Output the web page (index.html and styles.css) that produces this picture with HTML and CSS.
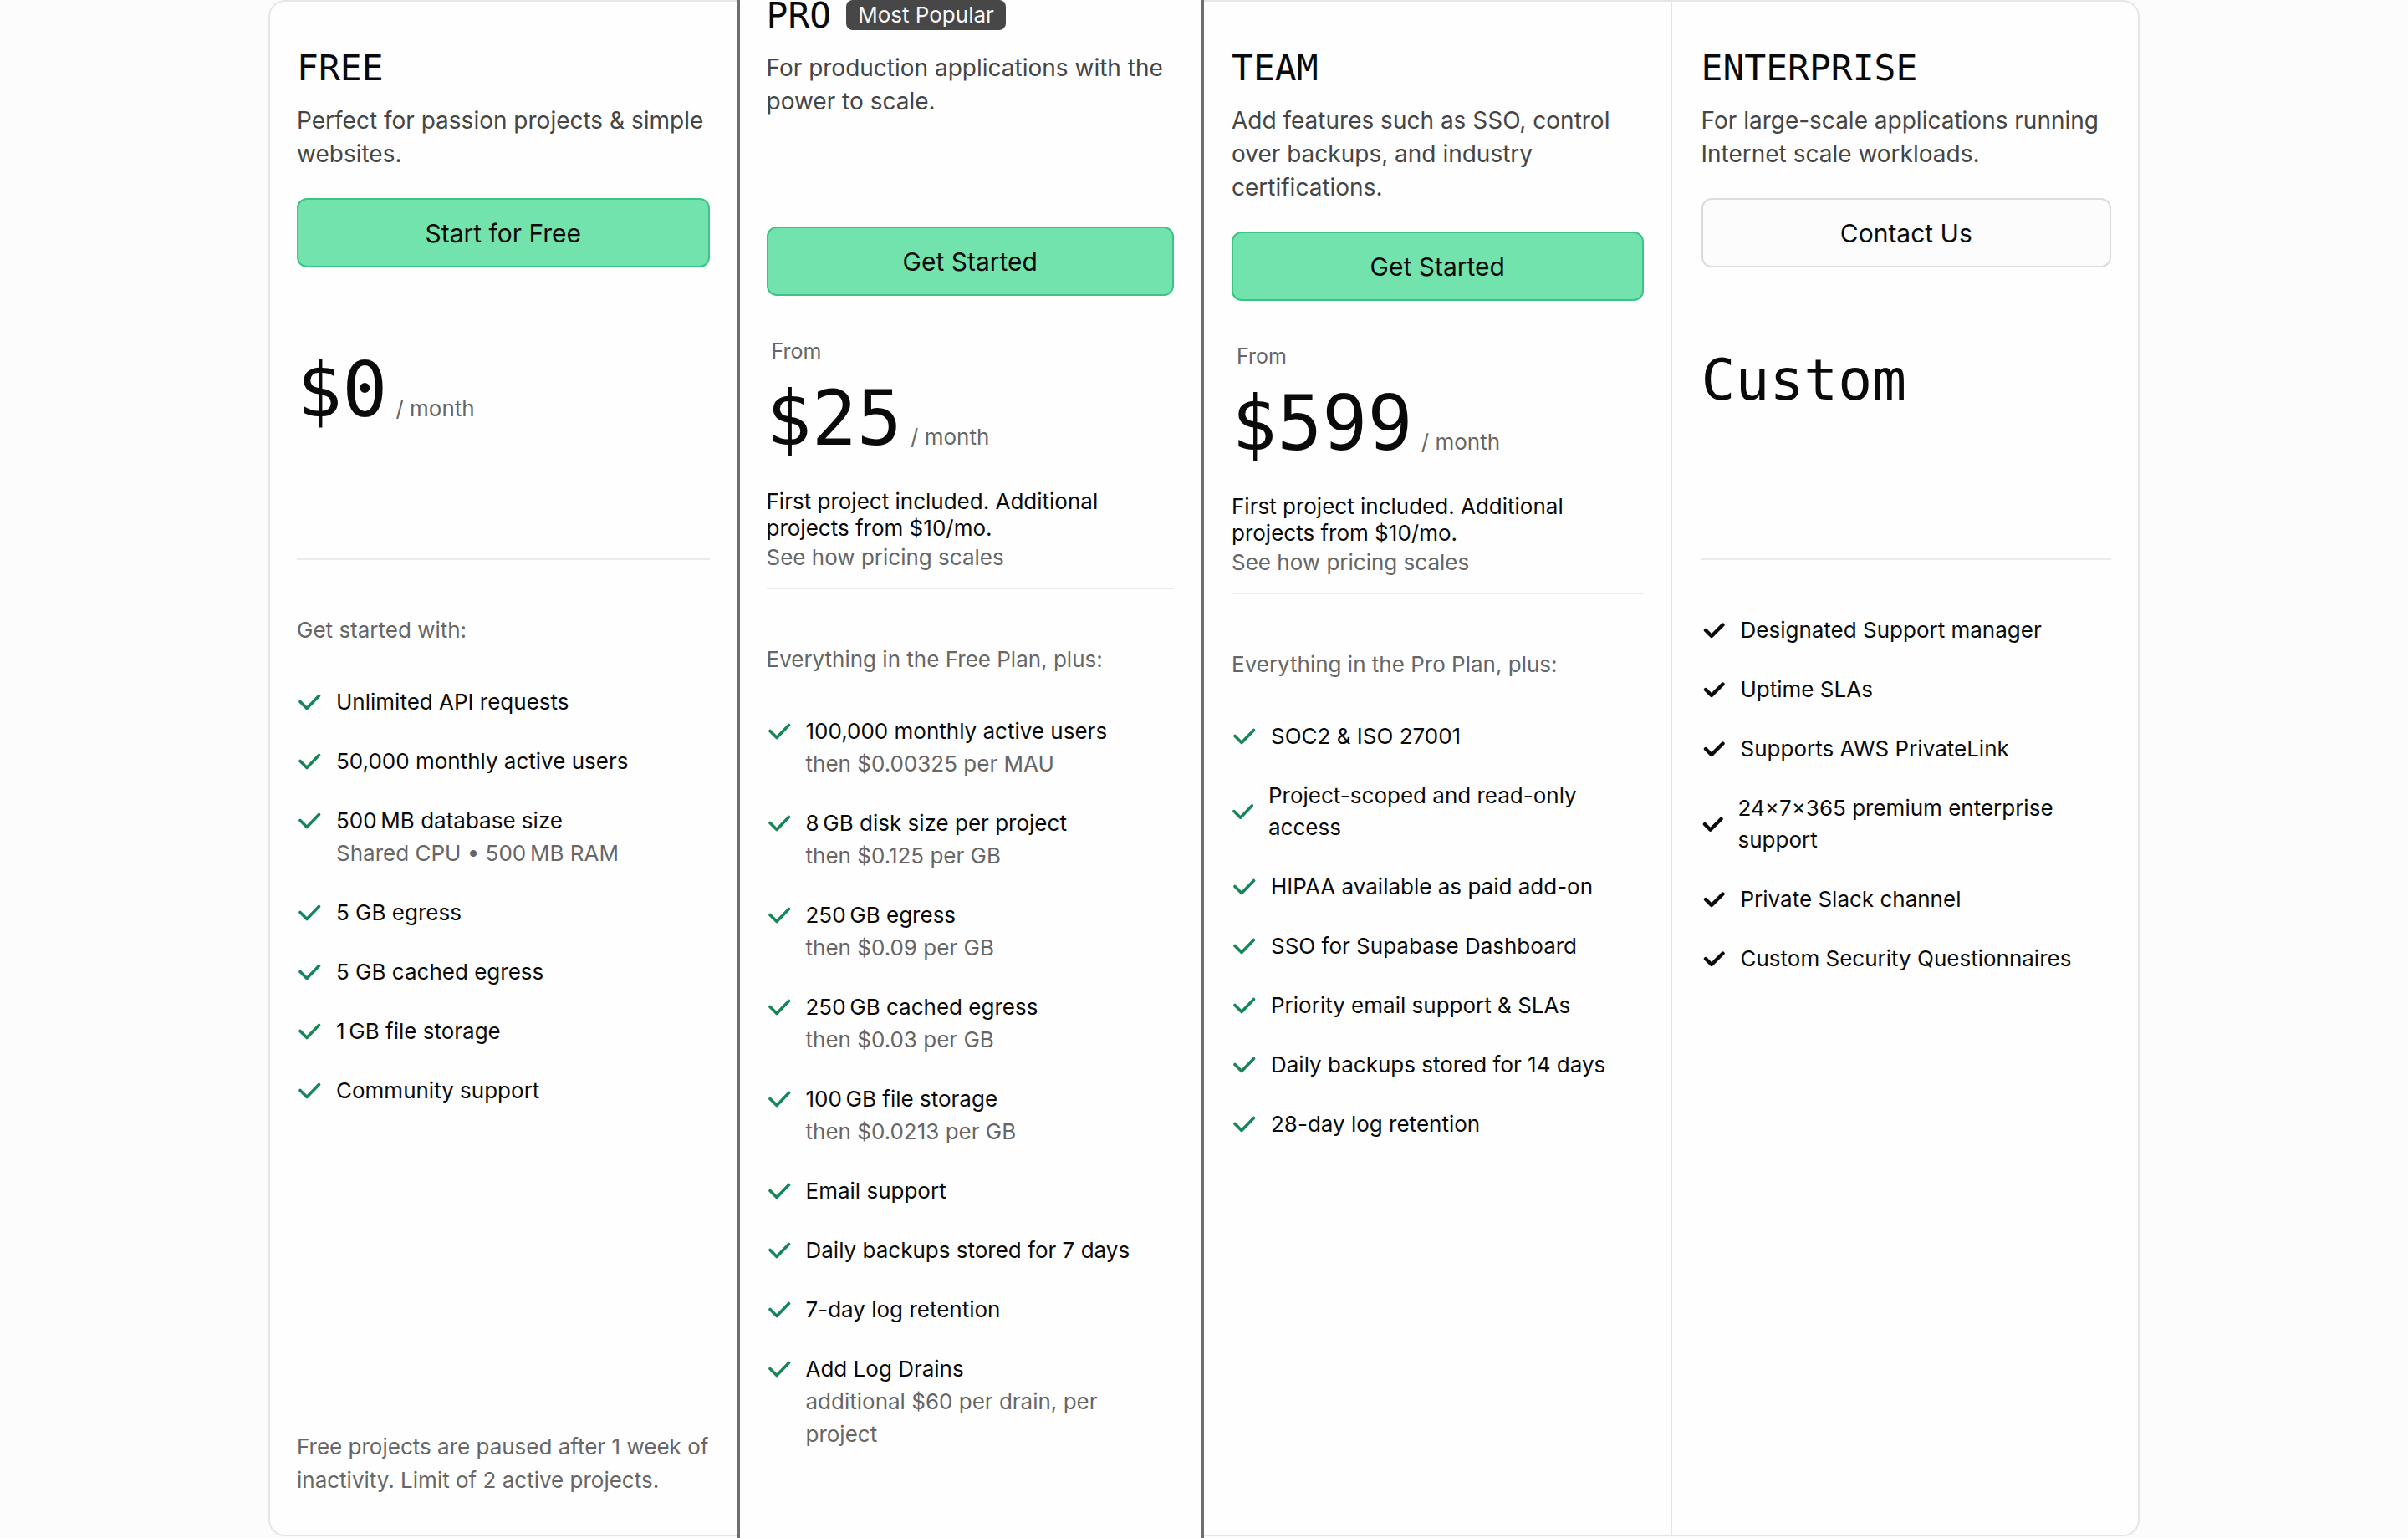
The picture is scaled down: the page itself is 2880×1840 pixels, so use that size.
FILE: index.html
```html
<!DOCTYPE html>
<html lang="en">
<head>
<meta charset="utf-8">
<title>Pricing</title>
<link rel="stylesheet" href="styles.css">
</head>
<body>
<main class="pricing">

  <section class="plan plan-free">
    <header class="plan-head">
      <div class="plan-title-row"><h3 class="plan-name">FREE</h3></div>
      <p class="plan-desc">Perfect for passion projects &amp; simple websites.</p>
    </header>
    <a class="btn btn-primary">Start for Free</a>
    <div class="price-area">
      <div class="from is-hidden">From</div>
      <div class="price"><span class="amount">$0</span><span class="per">/ month</span></div>
    </div>
    <div class="features">
      <p class="features-label">Get started with:</p>
      <ul class="feature-list">
        <li class="feature"><svg class="check" viewBox="0 0 26 20"><path d="M2 9.5 L10 17.5 L24.5 2.5"/></svg><div class="feature-text"><span class="main">Unlimited API requests</span></div></li>
        <li class="feature"><svg class="check" viewBox="0 0 26 20"><path d="M2 9.5 L10 17.5 L24.5 2.5"/></svg><div class="feature-text"><span class="main">50,000 monthly active users</span></div></li>
        <li class="feature"><svg class="check" viewBox="0 0 26 20"><path d="M2 9.5 L10 17.5 L24.5 2.5"/></svg><div class="feature-text"><span class="main">500&#8201;MB database size</span><span class="sub">Shared CPU • 500&#8201;MB RAM</span></div></li>
        <li class="feature"><svg class="check" viewBox="0 0 26 20"><path d="M2 9.5 L10 17.5 L24.5 2.5"/></svg><div class="feature-text"><span class="main">5 GB egress</span></div></li>
        <li class="feature"><svg class="check" viewBox="0 0 26 20"><path d="M2 9.5 L10 17.5 L24.5 2.5"/></svg><div class="feature-text"><span class="main">5 GB cached egress</span></div></li>
        <li class="feature"><svg class="check" viewBox="0 0 26 20"><path d="M2 9.5 L10 17.5 L24.5 2.5"/></svg><div class="feature-text"><span class="main">1&#8201;GB file storage</span></div></li>
        <li class="feature"><svg class="check" viewBox="0 0 26 20"><path d="M2 9.5 L10 17.5 L24.5 2.5"/></svg><div class="feature-text"><span class="main">Community support</span></div></li>
      </ul>
    </div>
    <p class="plan-footnote">Free projects are paused after 1 week of inactivity. Limit of 2 active projects.</p>
  </section>

  <section class="plan plan-pro">
    <header class="plan-head">
      <div class="plan-title-row"><h3 class="plan-name">PRO</h3><span class="badge">Most Popular</span></div>
      <p class="plan-desc">For production applications with the power to scale.</p>
    </header>
    <a class="btn btn-primary btn-pro">Get Started</a>
    <div class="price-area">
      <div class="from">From</div>
      <div class="price"><span class="amount">$25</span><span class="per">/ month</span></div>
      <p class="price-note">First project included. Additional projects from $10/mo.</p>
      <p class="price-link">See how pricing scales</p>
    </div>
    <div class="features">
      <p class="features-label">Everything in the Free Plan, plus:</p>
      <ul class="feature-list">
        <li class="feature"><svg class="check" viewBox="0 0 26 20"><path d="M2 9.5 L10 17.5 L24.5 2.5"/></svg><div class="feature-text"><span class="main">100,000 monthly active users</span><span class="sub">then $0.00325 per MAU</span></div></li>
        <li class="feature"><svg class="check" viewBox="0 0 26 20"><path d="M2 9.5 L10 17.5 L24.5 2.5"/></svg><div class="feature-text"><span class="main">8&#8201;GB disk size per project</span><span class="sub">then $0.125 per GB</span></div></li>
        <li class="feature"><svg class="check" viewBox="0 0 26 20"><path d="M2 9.5 L10 17.5 L24.5 2.5"/></svg><div class="feature-text"><span class="main">250&#8201;GB egress</span><span class="sub">then $0.09 per GB</span></div></li>
        <li class="feature"><svg class="check" viewBox="0 0 26 20"><path d="M2 9.5 L10 17.5 L24.5 2.5"/></svg><div class="feature-text"><span class="main">250&#8201;GB cached egress</span><span class="sub">then $0.03 per GB</span></div></li>
        <li class="feature"><svg class="check" viewBox="0 0 26 20"><path d="M2 9.5 L10 17.5 L24.5 2.5"/></svg><div class="feature-text"><span class="main">100&#8201;GB file storage</span><span class="sub">then $0.0213 per GB</span></div></li>
        <li class="feature"><svg class="check" viewBox="0 0 26 20"><path d="M2 9.5 L10 17.5 L24.5 2.5"/></svg><div class="feature-text"><span class="main">Email support</span></div></li>
        <li class="feature"><svg class="check" viewBox="0 0 26 20"><path d="M2 9.5 L10 17.5 L24.5 2.5"/></svg><div class="feature-text"><span class="main">Daily backups stored for 7 days</span></div></li>
        <li class="feature"><svg class="check" viewBox="0 0 26 20"><path d="M2 9.5 L10 17.5 L24.5 2.5"/></svg><div class="feature-text"><span class="main">7-day log retention</span></div></li>
        <li class="feature"><svg class="check" viewBox="0 0 26 20"><path d="M2 9.5 L10 17.5 L24.5 2.5"/></svg><div class="feature-text"><span class="main">Add Log Drains</span><span class="sub">additional $60 per drain, per project</span></div></li>
      </ul>
    </div>
  </section>

  <section class="plan plan-team">
    <header class="plan-head">
      <div class="plan-title-row"><h3 class="plan-name">TEAM</h3></div>
      <p class="plan-desc">Add features such as SSO, control over backups, and industry certifications.</p>
    </header>
    <a class="btn btn-primary">Get Started</a>
    <div class="price-area">
      <div class="from">From</div>
      <div class="price"><span class="amount">$599</span><span class="per">/ month</span></div>
      <p class="price-note">First project included. Additional projects from $10/mo.</p>
      <p class="price-link">See how pricing scales</p>
    </div>
    <div class="features">
      <p class="features-label">Everything in the Pro Plan, plus:</p>
      <ul class="feature-list">
        <li class="feature"><svg class="check" viewBox="0 0 26 20"><path d="M2 9.5 L10 17.5 L24.5 2.5"/></svg><div class="feature-text"><span class="main">SOC2 &amp; ISO 27001</span></div></li>
        <li class="feature feature-wrap"><svg class="check" viewBox="0 0 26 20"><path d="M2 9.5 L10 17.5 L24.5 2.5"/></svg><div class="feature-text"><span class="main">Project-scoped and read-only access</span></div></li>
        <li class="feature"><svg class="check" viewBox="0 0 26 20"><path d="M2 9.5 L10 17.5 L24.5 2.5"/></svg><div class="feature-text"><span class="main">HIPAA available as paid add-on</span></div></li>
        <li class="feature"><svg class="check" viewBox="0 0 26 20"><path d="M2 9.5 L10 17.5 L24.5 2.5"/></svg><div class="feature-text"><span class="main">SSO for Supabase Dashboard</span></div></li>
        <li class="feature"><svg class="check" viewBox="0 0 26 20"><path d="M2 9.5 L10 17.5 L24.5 2.5"/></svg><div class="feature-text"><span class="main">Priority email support &amp; SLAs</span></div></li>
        <li class="feature"><svg class="check" viewBox="0 0 26 20"><path d="M2 9.5 L10 17.5 L24.5 2.5"/></svg><div class="feature-text"><span class="main">Daily backups stored for 14 days</span></div></li>
        <li class="feature"><svg class="check" viewBox="0 0 26 20"><path d="M2 9.5 L10 17.5 L24.5 2.5"/></svg><div class="feature-text"><span class="main">28-day log retention</span></div></li>
      </ul>
    </div>
  </section>

  <section class="plan plan-enterprise">
    <header class="plan-head">
      <div class="plan-title-row"><h3 class="plan-name">ENTERPRISE</h3></div>
      <p class="plan-desc">For large-scale applications running Internet scale workloads.</p>
    </header>
    <a class="btn btn-secondary">Contact Us</a>
    <div class="price-area">
      <div class="from is-hidden">From</div>
      <div class="price"><span class="amount amount-custom">Custom</span></div>
    </div>
    <div class="features">
      <ul class="feature-list">
        <li class="feature feature-dark"><svg class="check" viewBox="0 0 26 20"><path d="M3 10 L10 17 L23.5 3.5"/></svg><div class="feature-text"><span class="main">Designated Support manager</span></div></li>
        <li class="feature feature-dark"><svg class="check" viewBox="0 0 26 20"><path d="M3 10 L10 17 L23.5 3.5"/></svg><div class="feature-text"><span class="main">Uptime SLAs</span></div></li>
        <li class="feature feature-dark"><svg class="check" viewBox="0 0 26 20"><path d="M3 10 L10 17 L23.5 3.5"/></svg><div class="feature-text"><span class="main">Supports AWS PrivateLink</span></div></li>
        <li class="feature feature-dark feature-wrap"><svg class="check" viewBox="0 0 26 20"><path d="M3 10 L10 17 L23.5 3.5"/></svg><div class="feature-text"><span class="main">24×7×365 premium enterprise support</span></div></li>
        <li class="feature feature-dark"><svg class="check" viewBox="0 0 26 20"><path d="M3 10 L10 17 L23.5 3.5"/></svg><div class="feature-text"><span class="main">Private Slack channel</span></div></li>
        <li class="feature feature-dark"><svg class="check" viewBox="0 0 26 20"><path d="M3 10 L10 17 L23.5 3.5"/></svg><div class="feature-text"><span class="main">Custom Security Questionnaires</span></div></li>
      </ul>
    </div>
  </section>

</main>
</body>
</html>
```

FILE: styles.css
```css
* {
  box-sizing: border-box;
}

html,
body {
  margin: 0;
  padding: 0;
}

body {
  height: 1840px;
  overflow: hidden;
  background: #fcfcfc;
  font-family: Inter, "Noto Sans", "Liberation Sans", sans-serif;
  color: #111;
}

.pricing {
  width: 2238px;
  min-height: 1838px;
  margin: 0 auto;
  display: grid;
  grid-template-columns: repeat(4, 1fr);
}

.plan {
  display: flex;
  flex-direction: column;
  min-width: 0;
  background: #fefefe;
  padding: 55px 32px 45px;
  border-top: 2px solid #e6e6e6;
  border-bottom: 2px solid #e6e6e6;
}

.plan-free {
  border-left: 2px solid #e6e6e6;
  border-radius: 20px 0 0 20px;
}

.plan-pro {
  margin: -63px 0 -80px;
  border: 4px solid #6e6e6e;
  padding-top: 53px;
}

.plan-team {
  border-right: 2px solid #e6e6e6;
  padding-left: 33px;
}

.plan-enterprise {
  border-right: 2px solid #e6e6e6;
  border-radius: 0 20px 20px 0;
  padding-left: 35px;
}

/* header */
.plan-title-row {
  display: flex;
  align-items: center;
  gap: 18px;
  height: 48px;
}

.plan-name {
  margin: 0;
  font-family: "DejaVu Sans Mono", "Liberation Mono", monospace;
  font-weight: 400;
  font-size: 43px;
  line-height: 48px;
  color: #0a0a0a;
}

.badge {
  display: inline-block;
  padding: 0 14px;
  border-radius: 8px;
  background: #474747;
  color: #f7f7f7;
  font-size: 26px;
  line-height: 36px;
}

.plan-desc {
  margin: 19px 0 0;
  font-size: 28px;
  line-height: 40px;
  color: #454545;
}

/* buttons */
.btn {
  margin-top: 33px;
  height: 83px;
  display: flex;
  align-items: center;
  justify-content: center;
  border-radius: 12px;
  font-size: 30px;
  color: #0a0a0a;
  text-decoration: none;
}

.btn-primary {
  background: #72e3ad;
  border: 2px solid #3bc585;
}

.btn-pro {
  margin-top: 130px;
}

.btn-secondary {
  background: #fcfcfc;
  border: 2px solid #dcdcdc;
}

/* price */
.price-area {
  min-height: 350px;
  padding: 47px 0 17px;
  border-bottom: 2px solid #ebebeb;
}

.from {
  padding-left: 6px;
  font-size: 25px;
  line-height: 38px;
  color: #666;
}

.is-hidden {
  visibility: hidden;
}

.price {
  display: flex;
  align-items: baseline;
  gap: 10px;
  margin-top: 12px;
}

.amount {
  font-family: "DejaVu Sans Mono", "Liberation Mono", monospace;
  font-size: 90px;
  line-height: 100px;
  color: #0a0a0a;
}

.amount-custom {
  font-size: 68px;
  line-height: 75px;
}

.per {
  font-size: 26px;
  color: #666;
}

.price-note {
  margin: 33px 0 0;
  font-size: 26px;
  line-height: 32px;
  color: #0a0a0a;
}

.price-link {
  margin: 0;
  font-size: 26px;
  line-height: 38px;
  color: #666;
}

/* features */
.features {
  padding-top: 65px;
}

.features-label {
  margin: 0 0 48px;
  font-size: 26px;
  line-height: 38px;
  color: #666;
}

.feature-list {
  list-style: none;
  margin: 0;
  padding: 0;
  display: flex;
  flex-direction: column;
  gap: 33px;
}

.feature {
  display: flex;
  align-items: flex-start;
  gap: 18px;
  font-size: 26px;
  line-height: 38px;
}

.check {
  flex-shrink: 0;
  width: 28px;
  height: 20px;
  margin-top: 9px;
  margin-left: 1px;
  fill: none;
  stroke: #17855a;
  stroke-width: 3.6;
  stroke-linecap: round;
  stroke-linejoin: round;
}

.feature-wrap {
  align-items: center;
}

.feature-wrap .check {
  margin-top: 0;
  width: 25px;
}

.feature-dark .check {
  stroke: #0a0a0a;
  stroke-width: 4.4;
}

.feature-text {
  display: flex;
  flex-direction: column;
  min-width: 0;
}

.main {
  color: #0a0a0a;
}

.sub {
  line-height: 39px;
  color: #666;
}

.plan-footnote {
  margin: auto 0 0;
  font-size: 26px;
  line-height: 40px;
  color: #666;
}
```
